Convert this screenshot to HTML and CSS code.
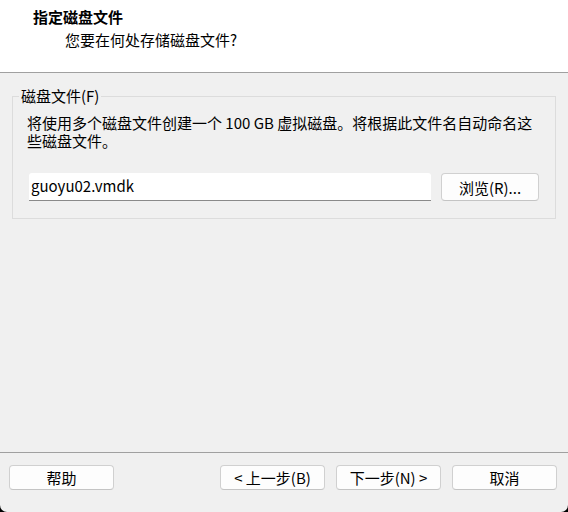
FILE: index.html
```html
<!DOCTYPE html>
<html lang="zh-CN">
<head>
    <meta charset="UTF-8">
    <title>新建虚拟机向导</title>
    <link rel="stylesheet" href="styles.css">
</head>
<body>
<div class="window">
    <div class="header">
        <div class="header-title">指定磁盘文件</div>
        <div class="header-sub">您要在何处存储磁盘文件?</div>
    </div>

    <div class="main">
        <fieldset class="group">
            <legend class="group-title">磁盘文件(F)</legend>
            <p class="desc">将使用多个磁盘文件创建一个 100 GB 虚拟磁盘。将根据此文件名自动命名这<br>些磁盘文件。</p>
            <div class="file-row">
                <input class="file-input" type="text" value="guoyu02.vmdk">
                <button class="btn btn-browse">浏览(R)...</button>
            </div>
        </fieldset>
    </div>

    <div class="footer">
        <button class="btn">帮助</button>
        <div class="nav">
            <button class="btn">&lt; 上一步(B)</button>
            <button class="btn">下一步(N) &gt;</button>
        </div>
        <button class="btn">取消</button>
    </div>
</div>
</body>
</html>
```

FILE: styles.css
```css
html {
    background: #000;
}

body {
    margin: 0;
    font-family: "Noto Sans CJK SC", "Noto Sans", sans-serif;
    font-size: 15px;
    color: #000;
}

.window {
    width: 568px;
    height: 512px;
    display: flex;
    flex-direction: column;
    background: #f0f0f0;
    border-radius: 0 0 7px 7px;
    overflow: hidden;
}

/* Header */
.header {
    height: 72px;
    background: #fff;
    border-bottom: 1px solid #a0a0a0;
}

.header-title {
    font-weight: bold;
    margin: 8px 0 0 33px;
    line-height: 18px;
}

.header-sub {
    margin: 5px 0 0 65px;
    line-height: 18px;
}

/* Main area */
.main {
    flex: 1;
    padding: 14px 12px 0 12px;
}

.group {
    margin: 0;
    width: 544px;
    box-sizing: border-box;
    border: 1px solid #dcdcdc;
    padding: 0 15px 17px 14px;
}

.group-title {
    padding: 0 2px;
    margin-left: -8px;
    line-height: 18px;
}

.desc {
    margin: 9px 0 0 0;
    line-height: 18px;
}

.file-row {
    display: flex;
    gap: 10px;
    margin-top: 23px;
    padding-left: 2px;
}

.file-input {
    width: 402px;
    height: 28px;
    box-sizing: border-box;
    border: none;
    border-bottom: 1px solid #8a8a8a;
    border-radius: 3px 3px 0 0;
    background: #fff;
    font: inherit;
    padding: 0 2px 2px 2px;
    outline: none;
}

/* Buttons */
.btn {
    width: 105px;
    height: 25px;
    box-sizing: border-box;
    background: #fdfdfd;
    border: 1px solid #d0d0d0;
    border-bottom-color: #c4c4c4;
    border-radius: 4px;
    font: inherit;
    color: #000;
    padding: 0;
}

.btn-browse {
    width: 98px;
    height: 28px;
}

/* Footer */
.footer {
    height: 47px;
    border-top: 1px solid #a0a0a0;
    display: flex;
    align-items: flex-start;
    justify-content: space-between;
    padding: 12px 11px 0 9px;
}

.nav {
    display: flex;
    gap: 11px;
    margin-left: auto;
    margin-right: 11px;
}
```
